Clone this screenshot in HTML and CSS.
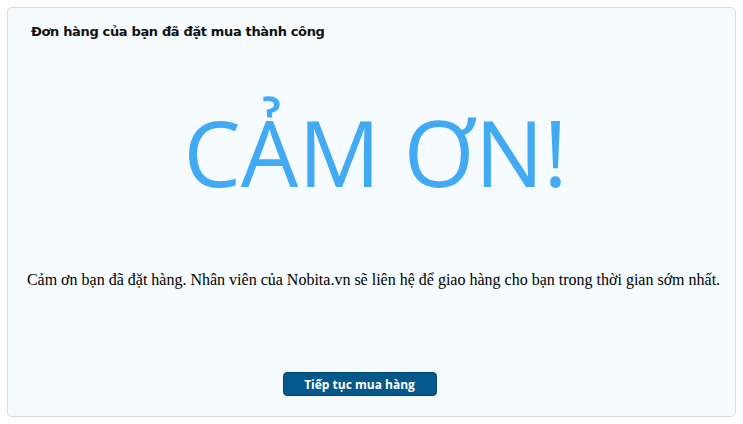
FILE: index.html
```html
<!DOCTYPE html>
<html lang="vi">
<head>
<meta charset="utf-8">
<link rel="stylesheet" href="styles.css">
</head>
<body>
<div class="panel">
  <h2 class="title">Đơn hàng của bạn đã đặt mua thành công</h2>
  <div class="thanks">CẢM ƠN!</div>
  <p class="message">Cảm ơn bạn đã đặt hàng. Nhân viên của Nobita.vn sẽ liên hệ để giao hàng cho bạn trong thời gian sớm nhất.</p>
  <div class="actions"><button class="btn">Tiếp tục mua hàng</button></div>
</div>
</body>
</html>
```
FILE: styles.css
```css
html, body { margin: 0; padding: 0; background: #fff; }
.panel {
  margin: 7px;
  height: 410px;
  box-sizing: border-box;
  border: 1px solid #d9dcdf;
  border-radius: 5px;
  background: #f5fbfe;
  display: flex;
  flex-direction: column;
}
.title {
  margin: 0;
  padding: 14px 0 0 23px;
  font-family: "DejaVu Sans", Verdana, sans-serif;
  font-weight: bold;
  font-size: 13px;
  line-height: 20px;
  color: #111;
  letter-spacing: -0.35px;
}
.thanks {
  margin-top: 60px;
  text-align: center;
  font-family: "Open Sans", sans-serif;
  font-size: 91px;
  line-height: 100px;
  color: #42aaf2;
  padding-left: 8px;
}
.message {
  margin: 69px 0 0;
  text-align: center;
  font-family: "Liberation Serif", "Times New Roman", serif;
  font-size: 16px;
  line-height: 18px;
  color: #000;
  padding-left: 4px;
}
.actions {
  margin-top: auto;
  margin-bottom: 20px;
  padding-right: 24px;
  display: flex;
  justify-content: center;
}
.btn {
  width: 154px;
  height: 24px;
  border: 1px solid #024a73;
  border-radius: 4px;
  background: #04588a;
  color: #fff;
  font-family: "Open Sans", sans-serif;
  font-weight: bold;
  font-size: 12px;
  padding: 0;
}
```
